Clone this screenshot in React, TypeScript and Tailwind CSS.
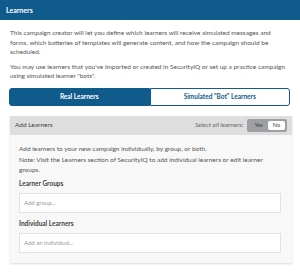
export default function App() {
  return (
    <div className="w-[300px] h-[272px] bg-white overflow-hidden text-[#555]" style={{ fontFamily: 'Lato, "Open Sans", sans-serif' }}>
      {/* Header */}
      <div className="h-[20px] bg-[#0f5b8c] flex items-center px-[6px]">
        <span className="text-white text-[7px] font-bold">Learners</span>
      </div>

      <div className="px-[10px] pt-[8px]">
        <p className="text-[6.5px] leading-[9.5px]">
          This campaign creator will let you define which learners will receive simulated messages and forms, which batteries of templates will generate content, and how the campaign should be scheduled.
        </p>
        <p className="text-[6.5px] leading-[9.5px] mt-[5px]">
          You may use learners that you've imported or created in SecurityIQ or set up a practice campaign using simulated learner "bots".
        </p>

        {/* Tabs */}
        <div className="mt-[7px] flex h-[18px] w-[281px] -ml-[1px]">
          <button className="flex-1 bg-[#0f5b8c] text-white text-[6.5px] font-bold rounded-l-[3px] border border-[#0f5b8c]">
            Real Learners
          </button>
          <button className="flex-1 bg-white text-[#0f5b8c] text-[6.5px] font-bold rounded-r-[3px] border border-[#0f5b8c]">
            Simulated "Bot" Learners
          </button>
        </div>

        {/* Add learners panel */}
        <div className="mt-[10px] w-[282px] bg-[#f8f8f8] shadow-[0_1px_2px_rgba(0,0,0,0.15)] pb-[10px]">
          <div className="h-[19px] bg-[#dedede] flex items-center justify-between pl-[5px] pr-[5px]">
            <span className="text-[6.5px] text-[#444]">Add Learners</span>
            <div className="flex items-center gap-[4px]">
              <span className="text-[6.5px] italic text-[#666]">Select all learners:</span>
              <div className="flex items-center bg-[#9ea1a4] rounded-[2px] p-[2px] h-[13px]">
                <span className="px-[5px] text-[5.5px] font-bold text-[#555]">Yes</span>
                <span className="px-[5px] h-full flex items-center bg-white rounded-[2px] text-[5.5px] text-[#444]">No</span>
              </div>
            </div>
          </div>

          <div className="px-[9px] pt-[9px]">
            <p className="text-[6.5px] leading-[9.5px]">Add learners to your new campaign individually, by group, or both.</p>
            <p className="text-[6.5px] leading-[9.5px] mt-[2px]">
              Note: Visit the Learners section of SecurityIQ to add individual learners or edit learner groups.
            </p>
            <div className="mt-[5px] text-[6.5px] font-bold text-[#444]">Learner Groups</div>
            <div className="mt-[4px] h-[20px] w-[262px] bg-white border border-[#e2e2e2] flex items-center px-[4px]">
              <span className="text-[6px] text-[#999]">Add group...</span>
            </div>
            <div className="mt-[6px] text-[6.5px] font-bold text-[#444]">Individual Learners</div>
            <div className="mt-[4px] h-[20px] w-[262px] bg-white border border-[#e2e2e2] flex items-center px-[4px]">
              <span className="text-[6px] text-[#999]">Add an individual...</span>
            </div>
          </div>
        </div>
      </div>
    </div>
  )
}
